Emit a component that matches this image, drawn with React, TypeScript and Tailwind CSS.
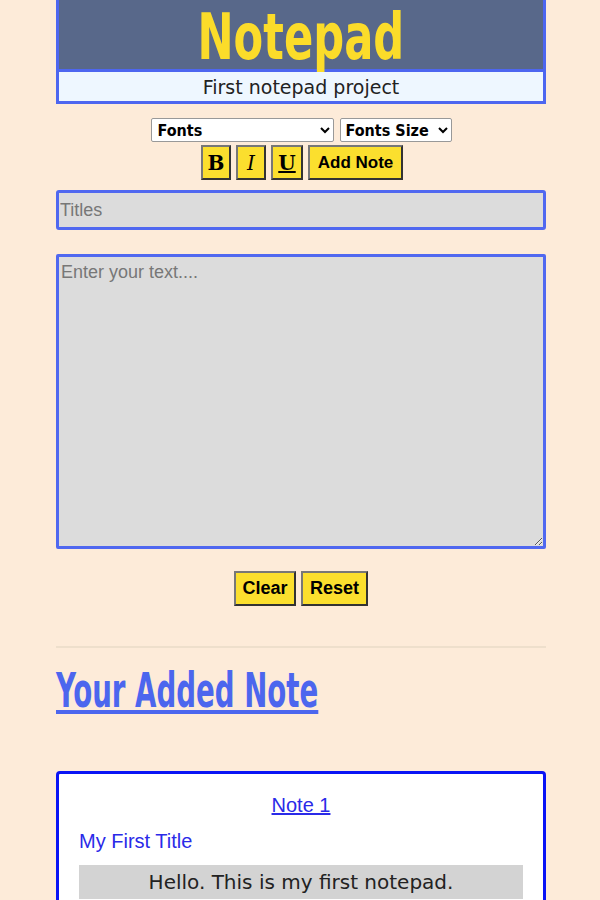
import React, { useState } from 'react';

const btn =
  "bg-[#fbdf2e] border-2 border-t-[#777] border-l-[#777] border-b-[#333] border-r-[#333] text-black";

const App = () => {
  const [title, setTitle] = useState('');
  const [text, setText] = useState('');

  return (
    <div className="min-h-screen bg-[#fdebd9] pb-10 font-['Liberation_Sans',Arial,sans-serif]">
      <div className="ml-[56px] w-[490px]">
        {/* header */}
        <div className="border-x-[3px] border-b-[3px] border-[#4d66f0]">
          <h1 className="h-[72px] bg-[#58688a] border-b-[3px] border-[#4d66f0] text-center text-[#fbdc2a] text-[64px] leading-[74px] font-bold font-['DejaVu_Sans_Condensed',sans-serif]">
            <span className="inline-block [transform:scaleX(0.75)]">Notepad</span>
          </h1>
          <p className="h-[29px] bg-[#eef7ff] text-center text-[19px] leading-[30px] text-[#222] font-['DejaVu_Sans',sans-serif]">
            First notepad project
          </p>
        </div>

        {/* toolbar */}
        <div className="mt-[14px] flex justify-center gap-[6px] font-['DejaVu_Sans_Condensed',sans-serif]">
          <select className="w-[183px] h-[24px] bg-white border border-[#999] rounded-[2px] text-[16px] font-bold pl-[2px]">
            <option>Fonts</option>
          </select>
          <select className="w-[112px] h-[24px] bg-white border border-[#999] rounded-[2px] text-[16px] font-bold pl-[1px]">
            <option>Fonts Size</option>
          </select>
        </div>
        <div className="mt-[3px] flex justify-center gap-[5px] pl-[2px]">
          <button className={`${btn} w-[30px] h-[35px] text-[20px] font-bold font-['DejaVu_Serif',serif]`}>B</button>
          <button className={`${btn} w-[30px] h-[35px] text-[20px] italic font-['DejaVu_Serif',serif]`}>I</button>
          <button className={`${btn} w-[32px] h-[35px] text-[20px] underline font-bold font-['DejaVu_Serif',serif]`}>U</button>
          <button className={`${btn} w-[95px] h-[35px] text-[17px] font-bold`}>Add Note</button>
        </div>

        {/* inputs */}
        <input
          value={title}
          onChange={(e) => setTitle(e.target.value)}
          placeholder="Titles"
          className="mt-[10px] block w-full h-[40px] bg-[#dcdcdc] border-[3px] border-[#5068f0] rounded-[3px] text-[18px] px-[1px] placeholder:text-[#777] outline-none"
        />
        <textarea
          value={text}
          onChange={(e) => setText(e.target.value)}
          placeholder="Enter your text...."
          className="mt-[24px] block w-full h-[295px] bg-[#dcdcdc] border-[3px] border-[#5068f0] rounded-[2px] text-[18px] px-[2px] py-[2px] placeholder:text-[#777] outline-none"
        />

        <div className="mt-[22px] flex justify-center gap-[5px]">
          <button className={`${btn} w-[62px] h-[35px] text-[18px] font-bold`}>Clear</button>
          <button className={`${btn} w-[67px] h-[35px] text-[18px] font-bold`}>Reset</button>
        </div>

        <hr className="mt-[40px] border-t-2 border-[#eedfcc]" />

        <h2 className="mt-[17px] h-[50px] text-[48px] leading-[50px] font-bold text-[#4c66ee] font-['DejaVu_Sans_Condensed',sans-serif]">
          <span className="inline-block origin-left [transform:scaleX(0.64)] whitespace-nowrap underline decoration-[4px] underline-offset-[3px]">
            Your Added Note
          </span>
        </h2>

        {/* note card */}
        <div className="mt-[56px] bg-white border-[3px] border-[#0a14f5] rounded-[4px] px-[20px] pt-[17px] pb-[20px]">
          <a href="#" className="block text-center text-[20px] text-[#2a2ae8] underline leading-[28px]">
            Note 1
          </a>
          <p className="mt-[8px] text-[20px] text-[#2a2ae8] leading-[28px]">My First Title</p>
          <div className="mt-[10px] bg-[#d3d3d3] text-center text-[20px] leading-[34px] text-[#222] font-['DejaVu_Sans',sans-serif]">
            Hello. This is my first notepad.
          </div>
        </div>
      </div>
    </div>
  );
};

export default App;
